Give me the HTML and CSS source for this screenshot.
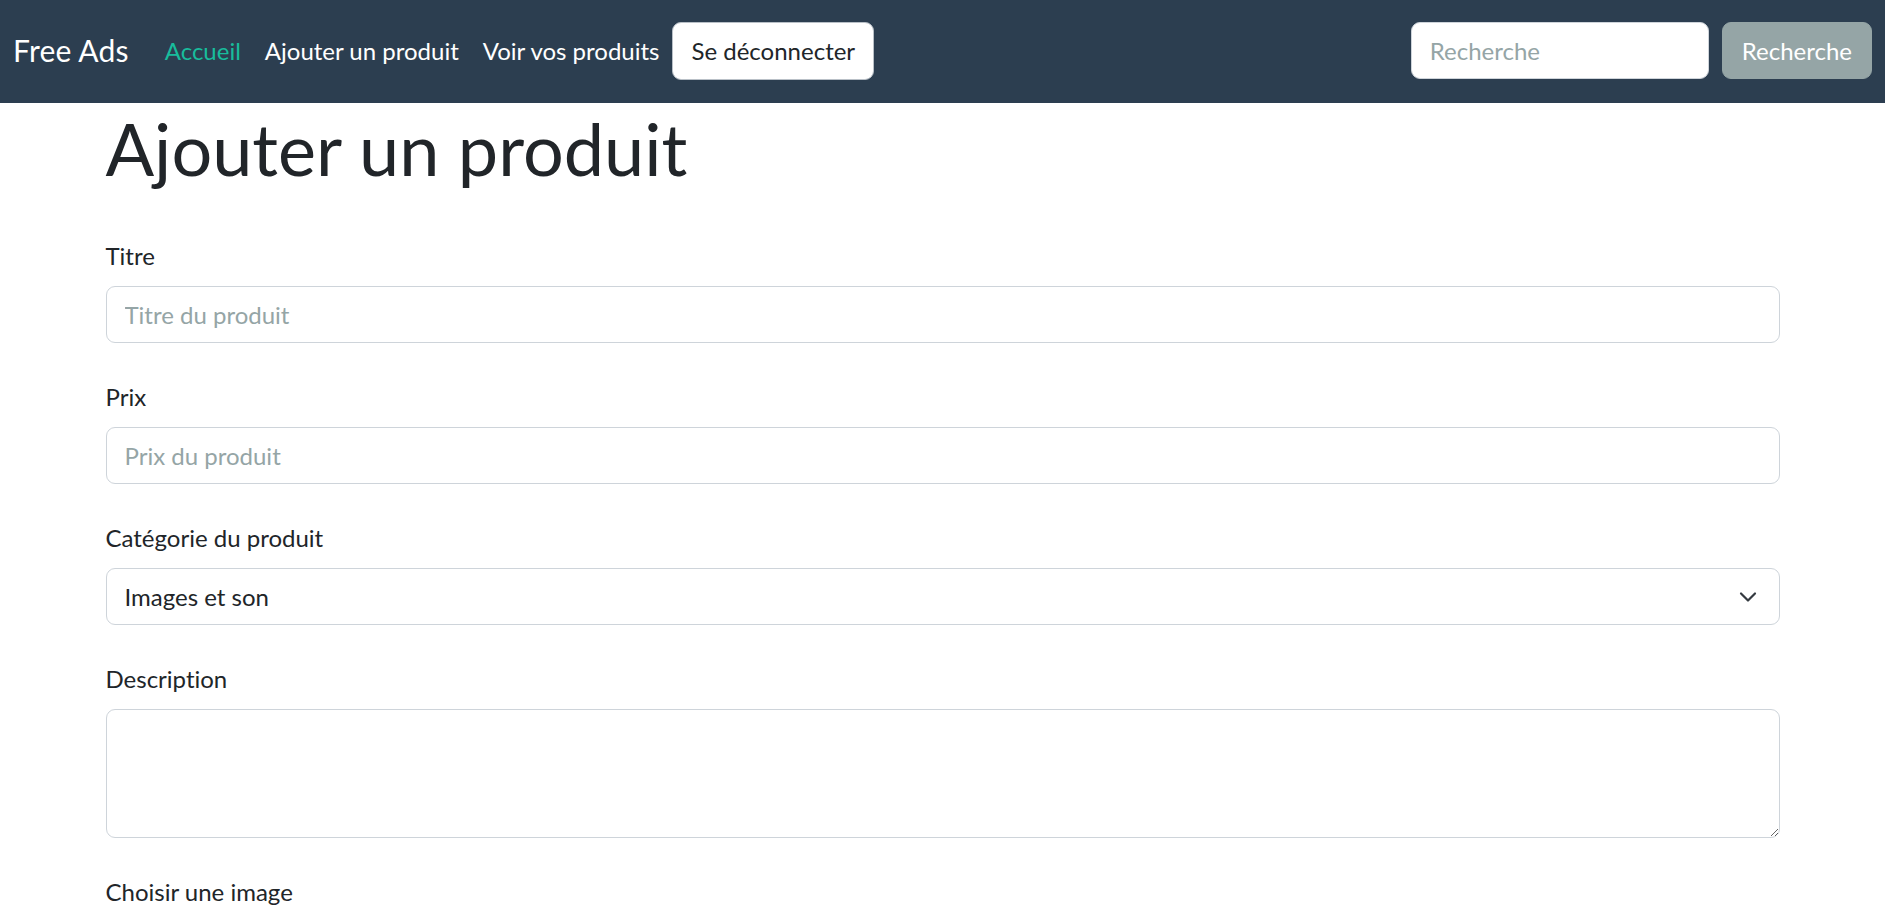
FILE: index.html
```html
<!DOCTYPE html>
<html lang="fr">
<head>
<meta charset="utf-8">
<title>Free Ads - Ajouter un produit</title>
<link rel="stylesheet" href="styles.css">
</head>
<body>
<nav class="navbar">
  <div class="nav-left">
    <a class="brand" href="#">Free Ads</a>
    <ul class="nav-links">
      <li><a class="nav-link active" href="#">Accueil</a></li>
      <li><a class="nav-link" href="#">Ajouter un produit</a></li>
      <li><a class="nav-link" href="#">Voir vos produits</a></li>
      <li><button class="btn btn-light" type="button">Se déconnecter</button></li>
    </ul>
  </div>
  <form class="search-form">
    <input class="search-input" type="text" placeholder="Recherche">
    <button class="btn btn-secondary" type="button">Recherche</button>
  </form>
</nav>

<main class="container">
  <h1 class="page-title">Ajouter un produit</h1>
  <form class="product-form">
    <div class="field">
      <label class="field-label" for="titre">Titre</label>
      <input class="control" id="titre" type="text" placeholder="Titre du produit">
    </div>
    <div class="field">
      <label class="field-label" for="prix">Prix</label>
      <input class="control" id="prix" type="text" placeholder="Prix du produit">
    </div>
    <div class="field">
      <label class="field-label" for="categorie">Catégorie du produit</label>
      <div class="select-wrap">
        <select class="control select" id="categorie">
          <option>Images et son</option>
          <option>Informatique</option>
          <option>Maison</option>
        </select>
        <svg class="chevron" width="18" height="12" viewBox="0 0 18 12" aria-hidden="true">
          <path d="M2 2.5 L9 9.5 L16 2.5" fill="none" stroke="#343a40" stroke-width="2.2" stroke-linecap="round" stroke-linejoin="round"/>
        </svg>
      </div>
    </div>
    <div class="field">
      <label class="field-label" for="description">Description</label>
      <textarea class="control textarea" id="description" rows="3"></textarea>
    </div>
    <div class="field">
      <label class="field-label" for="image">Choisir une image</label>
      <input class="control" id="image" type="file">
    </div>
  </form>
</main>
</body>
</html>
```

FILE: styles.css
```css
* {
  box-sizing: border-box;
}

html, body {
  margin: 0;
  padding: 0;
}

body {
  font-family: Lato, "Open Sans", "Liberation Sans", sans-serif;
  font-size: 24px;
  line-height: 36px;
  color: #212529;
  background: #ffffff;
  font-variant-ligatures: no-common-ligatures;
  font-feature-settings: "liga" 0, "clig" 0;
}

/* Navbar */
.navbar {
  display: flex;
  align-items: center;
  justify-content: space-between;
  height: 103px;
  padding: 0 13px 2px;
  background: #2c3e50;
}

.nav-left {
  display: flex;
  align-items: center;
}

.brand {
  font-size: 30px;
  line-height: 45px;
  color: #ffffff;
  text-decoration: none;
  margin-right: 24px;
  letter-spacing: 0.2px;
}

.nav-links {
  display: flex;
  align-items: center;
  list-style: none;
  margin: 0;
  padding: 0;
}

.nav-link {
  display: block;
  padding: 12px 12px;
  color: #ffffff;
  text-decoration: none;
  font-size: 24px;
  line-height: 36px;
}

.nav-link.active {
  color: #18bc9c;
}

.btn {
  font-family: inherit;
  font-size: 24px;
  line-height: 36px;
  height: 58px;
  padding: 0 18px;
  border-radius: 9px;
  cursor: pointer;
  font-variant-ligatures: no-common-ligatures;
}

.btn-light {
  margin-left: 1px;
  background: #ffffff;
  color: #212529;
  border: 1px solid #b9c0c7;
}

.btn-secondary {
  height: 57px;
  background: #95a5a6;
  color: #ffffff;
  border: 1px solid #95a5a6;
  padding: 0 19px;
}

.search-form {
  display: flex;
  align-items: center;
  gap: 13px;
}

.search-input {
  width: 298px;
  height: 57px;
  padding: 0 18px;
  font-family: inherit;
  font-size: 24px;
  color: #212529;
  background: #ffffff;
  border: 1px solid #ced4da;
  border-radius: 9px;
}

.search-input::placeholder,
.control::placeholder {
  color: #95a5a6;
}

/* Content */
.container {
  max-width: 1674px;
  margin: 0 auto;
}

.page-title {
  font-size: 72px;
  font-weight: 400;
  line-height: 86px;
  margin: 2px 0 47px;
}

.field {
  margin-bottom: 36px;
}

.field-label {
  display: block;
  margin-bottom: 12px;
}

.control {
  display: block;
  width: 100%;
  height: 57px;
  padding: 0 18px;
  font-family: inherit;
  font-size: 24px;
  color: #212529;
  background: #ffffff;
  border: 1px solid #ced4da;
  border-radius: 9px;
}

.select-wrap {
  position: relative;
}

.select {
  appearance: none;
  -webkit-appearance: none;
  padding-right: 60px;
}

.chevron {
  position: absolute;
  right: 23px;
  top: 23px;
  pointer-events: none;
}

.textarea {
  height: 129px;
  padding: 9px 18px;
  line-height: 36px;
  resize: vertical;
}
```
